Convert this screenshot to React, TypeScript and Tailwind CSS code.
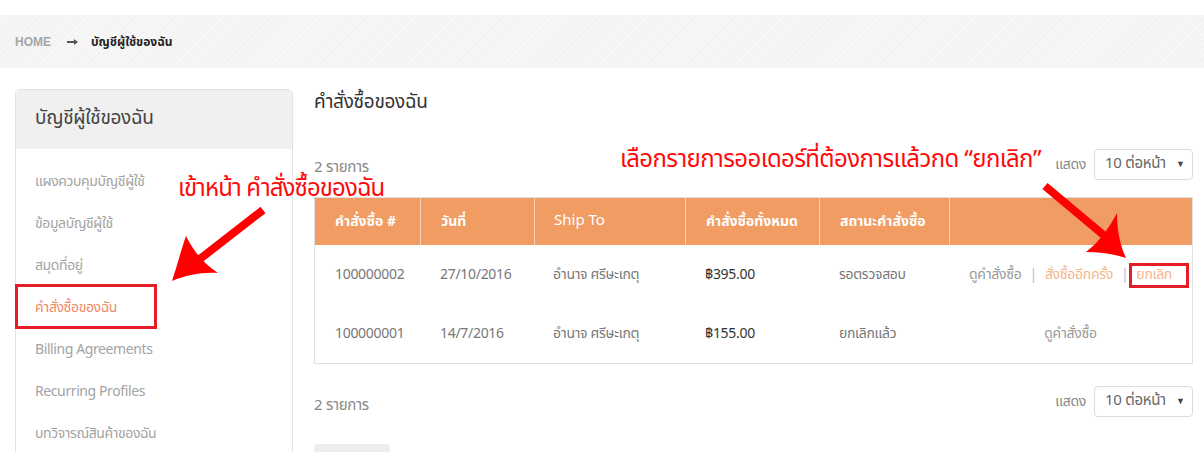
const thai = "font-['Noto_Sans_Thai','Noto_Sans',Tahoma,sans-serif]";

const menu = [
  { label: "แผงควบคุมบัญชีผู้ใช้" },
  { label: "ข้อมูลบัญชีผู้ใช้" },
  { label: "สมุดที่อยู่" },
  { label: "คำสั่งซื้อของฉัน", active: true },
  { label: "Billing Agreements" },
  { label: "Recurring Profiles" },
  { label: "บทวิจารณ์สินค้าของฉัน" },
  { label: "แท็กของฉัน" },
];

const orders = [
  { id: "100000002", date: "27/10/2016", to: "อำนาจ ศรีษะเกตุ", total: "฿395.00", status: "รอตรวจสอบ", cancel: true },
  { id: "100000001", date: "14/7/2016", to: "อำนาจ ศรีษะเกตุ", total: "฿155.00", status: "ยกเลิกแล้ว", cancel: false },
];

function PerPage() {
  return (
    <div className="flex items-center gap-[8px]">
      <span className="text-[14px] tracking-[-0.3px] text-[#888]">แสดง</span>
      <div className="flex h-[31px] w-[99px] items-center justify-between rounded-[4px] border border-[#dcdcdc] pl-[10px] pr-[7px]">
        <span className="text-[15px] tracking-[-0.3px] text-[#666]">10 ต่อหน้า</span>
        <span className="text-[9px] text-[#444]">▼</span>
      </div>
    </div>
  );
}

export default function App() {
  return (
    <div className={`relative h-[452px] w-[1204px] overflow-hidden bg-white ${thai}`}>
      <div className="pt-[15px]">
        <div className="flex h-[53px] items-center bg-[repeating-linear-gradient(135deg,#f3f3f3_0px,#f3f3f3_2px,#f7f7f7_2px,#f7f7f7_4px)] px-[15px] text-[12px] font-bold">
          <span className="font-['Liberation_Sans',sans-serif] text-[#a5a5a5]">HOME</span>
          <svg className="ml-[16px] mr-[13px]" width="11" height="6" viewBox="0 0 11 6">
            <path d="M0,3 H8" stroke="#555" strokeWidth="2" />
            <path d="M7,0 L11,3 L7,6 Z" fill="#555" />
          </svg>
          <span className="text-[#222]">บัญชีผู้ใช้ของฉัน</span>
        </div>
      </div>

      <div className="flex gap-[21px] pl-[15px] pr-[11px] pt-[21px]">
        <aside className="h-[420px] w-[278px] shrink-0 rounded-t-[5px] border border-[#e3e3e3]">
          <div className="flex h-[59px] items-center bg-[#f0f0f0] px-[19px] text-[19px] tracking-[-0.3px] text-[#444]">บัญชีผู้ใช้ของฉัน</div>
          <ul className="pt-[11px]">
            {menu.map((m) => (
              <li
                key={m.label}
                className={`flex h-[42px] items-center px-[19px] text-[14px] tracking-[-0.4px] ${m.active ? "text-[#f08a66]" : "text-[#a3a3a3]"}`}
              >
                {m.label}
              </li>
            ))}
          </ul>
        </aside>

        <main className="flex-1">
          <h1 className="h-[28px] text-[19px] leading-[28px] tracking-[-0.3px] text-[#333]">คำสั่งซื้อของฉัน</h1>

          <div className="mt-[32px] flex items-center justify-between">
            <span className="pt-[7px] text-[15px] tracking-[-0.3px] text-[#888]">2 รายการ</span>
            <PerPage />
          </div>

          <div className="mt-[17px] border border-[#e0e0e0]">
            <div className="grid h-[47px] grid-cols-[105px_114px_151px_134px_130px_1fr] items-stretch bg-[#f09c62] text-[14px] text-white">
              <div className="flex items-center pl-[20px] font-bold">คำสั่งซื้อ #</div>
              <div className="flex items-center border-l border-[#f8d3b7] pl-[20px] font-bold">วันที่</div>
              <div className="flex items-center border-l border-[#f8d3b7] pl-[19px] text-[15px]">Ship To</div>
              <div className="flex items-center border-l border-[#f8d3b7] pl-[20px] font-bold">คำสั่งซื้อทั้งหมด</div>
              <div className="flex items-center border-l border-[#f8d3b7] pl-[20px] font-bold">สถานะคำสั่งซื้อ</div>
              <div className="border-l border-[#f8d3b7]" />
            </div>
            {orders.map((o) => (
              <div
                key={o.id}
                className="grid h-[59px] grid-cols-[105px_114px_151px_134px_130px_1fr] items-center text-[14px] tracking-[-0.3px] text-[#777]"
              >
                <div className="pl-[20px]">{o.id}</div>
                <div className="pl-[20px]">{o.date}</div>
                <div className="pl-[19px]">{o.to}</div>
                <div className="pl-[20px] text-[#333]">{o.total}</div>
                <div className="pl-[20px]">{o.status}</div>
                <div className="flex justify-center gap-[8px] whitespace-nowrap">
                  <span className="text-[#999]">ดูคำสั่งซื้อ</span>
                  {o.cancel && (
                    <>
                      <span className="text-[#a9bfd6]">|</span>
                      <span className="text-[#f5b58c]">สั่งซื้ออีกครั้ง</span>
                      <span className="text-[#a9bfd6]">|</span>
                      <span className="text-[#f5b58c]">ยกเลิก</span>
                    </>
                  )}
                </div>
              </div>
            ))}
          </div>

          <div className="mt-[21px] flex items-center justify-between">
            <span className="pt-[10px] text-[15px] tracking-[-0.3px] text-[#888]">2 รายการ</span>
            <PerPage />
          </div>

          <div className="mt-[26px] h-[30px] w-[76px] rounded-[4px] bg-[#eeeeee]" />
        </main>
      </div>

      {/* annotations */}
      <div className="absolute left-[15px] top-[284px] h-[45px] w-[142px] border-[3px] border-[#e41e26]" />
      <div className="absolute left-[1129px] top-[263px] h-[25px] w-[60px] border-[3px] border-[#e41e26]" />

      <div className="absolute left-[178px] top-[173px] whitespace-nowrap text-[24px] leading-[32px] tracking-[-0.9px] text-[#ff0a0a]">เข้าหน้า คำสั่งซื้อของฉัน</div>
      <div className="absolute left-[620px] top-[144px] whitespace-nowrap text-[24px] leading-[32px] tracking-[-0.6px] text-[#ff0a0a]">เลือกรายการออเดอร์ที่ต้องการแล้วกด “ยกเลิก”</div>

      <svg className="pointer-events-none absolute left-0 top-0" width="1204" height="452" viewBox="0 0 1204 452">
        <line x1="263" y1="210" x2="196" y2="262" stroke="#ff0000" strokeWidth="8" />
        <path d="M172,281 C178,263 181,250 186,236 C194,252 204,264 218,273 C201,272 187,275 172,281 Z" fill="#ff0000" />
        <line x1="1045" y1="186" x2="1113" y2="243" stroke="#ff0000" strokeWidth="8" />
        <path d="M1126,258 C1120,245 1117,230 1117,213 C1109,228 1100,241 1086,252 C1100,252 1114,254 1126,258 Z" fill="#ff0000" />
      </svg>
    </div>
  );
}
